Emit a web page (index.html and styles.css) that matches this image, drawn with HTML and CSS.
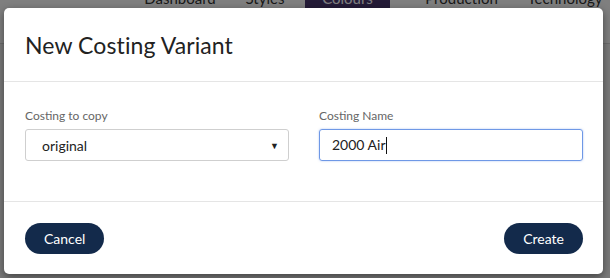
FILE: index.html
```html
<html>
<head>
<meta name="viewport" content="width=device-width, initial-scale=1">
<link rel="stylesheet" href="styles.css">
</head>
<body>
<div class="topbar">
  <div class="nav">
    <a class="nav-item" style="width:110px">Dashboard</a>
    <a class="nav-item" style="width:60px">Styles</a>
    <a class="nav-item active" style="width:85px">Colours</a>
    <a class="nav-item" style="width:127px">Production</a>
    <a class="nav-item" style="width:80px">Technology</a>
  </div>
</div>
<div class="overlay"></div>

<div class="modal">
  <div class="modal-header">
    <h2>New Costing Variant</h2>
  </div>
  <div class="modal-body">
    <div class="field">
      <label>Costing to copy</label>
      <div class="select-wrap">
        <select class="select">
          <option>original</option>
        </select>
        <span class="arrow">&#9660;</span>
      </div>
    </div>
    <div class="field">
      <label>Costing Name</label>
      <div class="input focus">2000 Air<span class="caret"></span></div>
    </div>
  </div>
  <div class="modal-footer">
    <button class="btn">Cancel</button>
    <button class="btn">Create</button>
  </div>
</div>
</body>
</html>
```

FILE: styles.css
```css
body {
  margin: 0;
  background-color: #f4f4f4;
  font-family: "Lato", "Open Sans", sans-serif;
  width: 610px;
  height: 278px;
  overflow: hidden;
  position: relative;
}

.topbar {
  height: 43px;
  border-bottom: 1px solid #d8d8d8;
  background: #ffffff;
  padding-left: 125px;
}

.nav {
  display: flex;
  height: 43px;
}

.nav-item {
  display: block;
  height: 30px;
  margin-top: -15px;
  line-height: 26px;
  font-size: 15px;
  color: #333;
  text-align: center;
  box-sizing: border-box;
}

.nav-item.active {
  background: #48366f;
  color: #fff;
  height: 23px;
  margin-left: 10px;
  margin-right: 8px;
}

.overlay {
  position: absolute;
  left: 0;
  top: 0;
  right: 0;
  bottom: 0;
  background: rgba(0, 0, 0, 0.5);
}

.modal {
  position: absolute;
  left: 4px;
  top: 8px;
  width: 599px;
  height: 266px;
  background: #fff;
  border-radius: 5px;
  box-shadow: 0 3px 8px rgba(0, 0, 0, 0.45);
  display: flex;
  flex-direction: column;
}

.modal-header {
  height: 73px;
  padding: 0 21px;
  border-bottom: 1px solid #e5e5e5;
  display: flex;
  align-items: center;
}

.modal-header h2 {
  margin: 0;
  font-size: 23px;
  font-weight: normal;
  color: #222;
  letter-spacing: 0.1px;
}

.modal-body {
  height: 120px;
  box-sizing: border-box;
  padding: 26px 20px 0 21px;
  border-bottom: 1px solid #e5e5e5;
  display: grid;
  grid-template-columns: 264px 264px;
  column-gap: 30px;
}

.field label {
  display: block;
  font-size: 12px;
  color: #666;
  height: 21px;
}

.select-wrap {
  position: relative;
}

.select {
  -webkit-appearance: none;
  appearance: none;
  width: 264px;
  height: 32px;
  border: 1px solid #cfcfcf;
  border-radius: 3px;
  background: #fff;
  padding: 0 0 0 16px;
  font-family: inherit;
  font-size: 14px;
  color: #222;
  outline: none;
}

.arrow {
  position: absolute;
  right: 10px;
  top: 11px;
  font-size: 9px;
  color: #222;
}

.input {
  width: 264px;
  height: 32px;
  box-sizing: border-box;
  border: 1px solid #cfcfcf;
  border-radius: 3px;
  padding-left: 12px;
  font-size: 14px;
  line-height: 30px;
  color: #222;
}

.input.focus {
  border-color: #6f98e6;
  box-shadow: 0 0 2px rgba(80, 130, 230, 0.5);
}

.caret {
  display: inline-block;
  width: 1px;
  height: 17px;
  background: #111;
  vertical-align: -4px;
}

.modal-footer {
  flex: 1;
  padding: 0 20px 0 21px;
  display: flex;
  justify-content: space-between;
  align-items: center;
}

.btn {
  height: 31px;
  border: none;
  border-radius: 16px;
  background: #132a4b;
  color: #fff;
  font-family: inherit;
  font-size: 14px;
  padding: 0 19px;
  cursor: pointer;
}
```
